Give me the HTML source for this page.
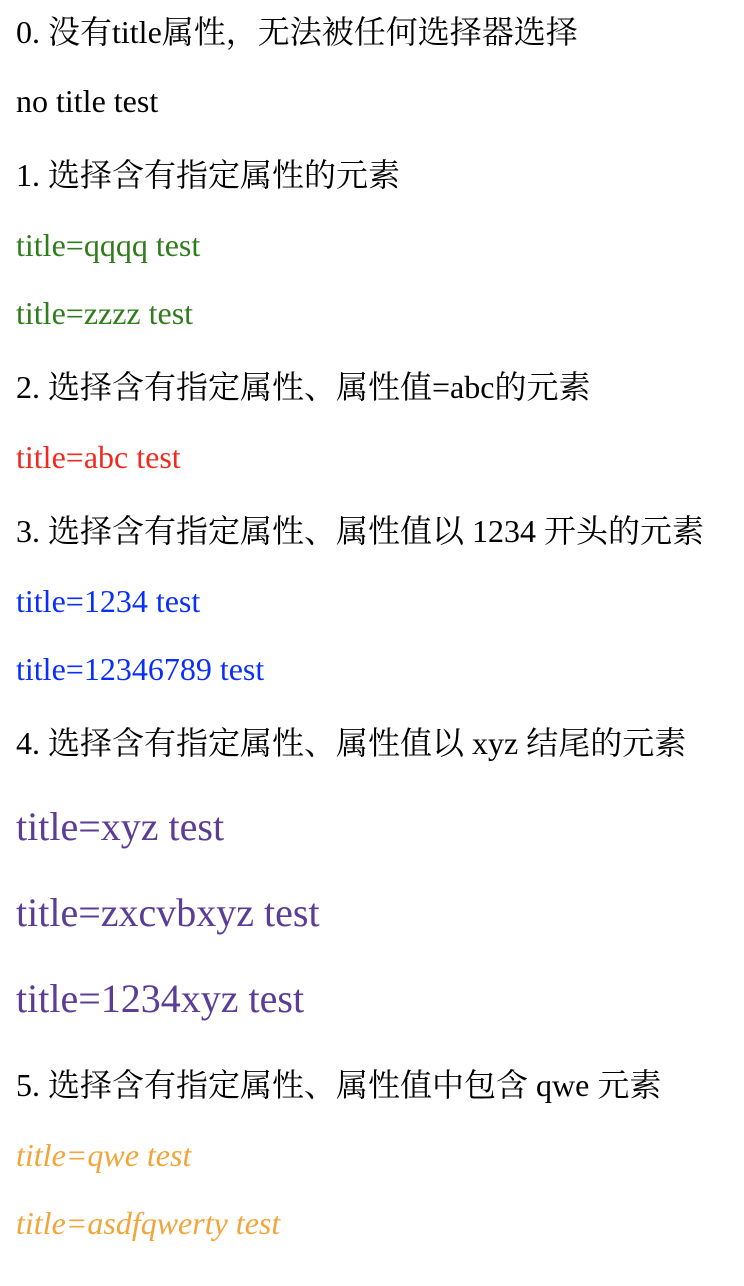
<!DOCTYPE html>
<html><head><meta charset="utf-8"><style>
html,body{margin:0;padding:0;background:#fff;width:744px;height:1286px;overflow:hidden}
div{position:absolute;left:16px;white-space:nowrap;font-family:"Liberation Serif","Noto Serif CJK SC",serif;font-size:32px;line-height:37px;color:#000}
.g{color:#2f7d1c}.r{color:#f2291f}.b{color:#0a2ffa}.p{color:#5b3c96;font-size:40px;line-height:46px}.o{color:#f2a53a;font-style:italic}
</style></head><body>
<div style="top:14px">0. 没有title属性，无法被任何选择器选择</div>
<div style="top:83px">no title test</div>
<div style="top:157px">1. 选择含有指定属性的元素</div>
<div class="g" style="top:227px">title=qqqq test</div>
<div class="g" style="top:295px">title=zzzz test</div>
<div style="top:369px">2. 选择含有指定属性、属性值=abc的元素</div>
<div class="r" style="top:439px">title=abc test</div>
<div style="top:513px">3. 选择含有指定属性、属性值以 1234 开头的元素</div>
<div class="b" style="top:583px">title=1234 test</div>
<div class="b" style="top:651px">title=12346789 test</div>
<div style="top:725px">4. 选择含有指定属性、属性值以 xyz 结尾的元素</div>
<div class="p" style="top:804px">title=xyz test</div>
<div class="p" style="top:890px">title=zxcvbxyz test</div>
<div class="p" style="top:976px">title=1234xyz test</div>
<div style="top:1067px">5. 选择含有指定属性、属性值中包含 qwe 元素</div>
<div class="o" style="top:1137px">title=qwe test</div>
<div class="o" style="top:1205px">title=asdfqwerty test</div>
</body></html>
